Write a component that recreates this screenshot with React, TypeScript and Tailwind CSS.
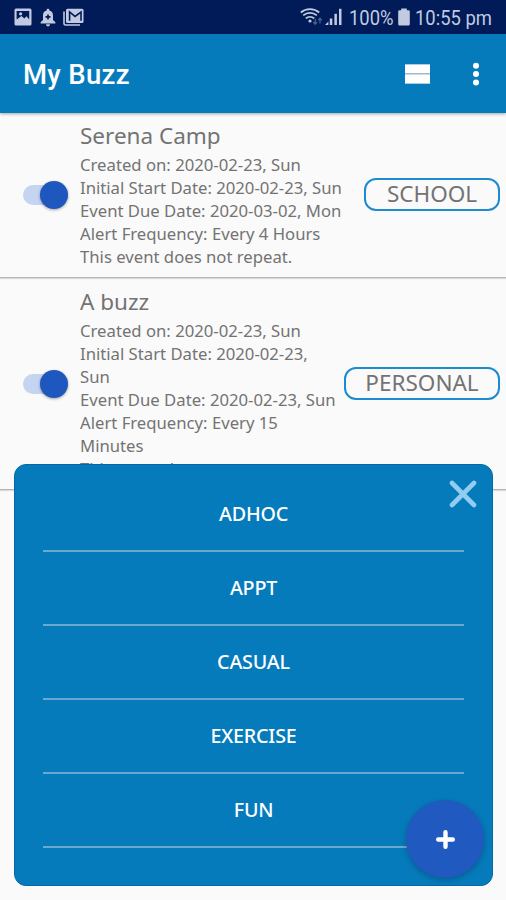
import React, { useState } from 'react';

interface BuzzEvent {
  title: string;
  lines: string[];
  category: string;
  badgeClass: string;
  textClass: string;
}

const EVENTS: BuzzEvent[] = [
  {
    title: 'Serena Camp',
    lines: [
      'Created on: 2020-02-23, Sun',
      'Initial Start Date: 2020-02-23, Sun',
      'Event Due Date: 2020-03-02, Mon',
      'Alert Frequency: Every 4 Hours',
      'This event does not repeat.'
    ],
    category: 'SCHOOL',
    badgeClass: 'w-[136px]',
    textClass: 'w-[270px]'
  },
  {
    title: 'A buzz',
    lines: [
      'Created on: 2020-02-23, Sun',
      'Initial Start Date: 2020-02-23, Sun',
      'Event Due Date: 2020-02-23, Sun',
      'Alert Frequency: Every 15 Minutes',
      'This event does not repeat.'
    ],
    category: 'PERSONAL',
    badgeClass: 'w-[156px]',
    textClass: 'w-[259px]'
  }
];

const CATEGORIES = ['ADHOC', 'APPT', 'CASUAL', 'EXERCISE', 'FUN'];

const StatusBar: React.FC = () => (
  <div className="flex h-[34px] shrink-0 items-center justify-between bg-[#001b58] pl-[14px] pr-[14px] text-[#c3cae0]">
    <div className="flex items-center">
      {/* Screenshot */}
      <svg width="18" height="18" viewBox="0 0 18 18" fill="none">
        <rect x="0.5" y="0.5" width="17" height="17" rx="1.5" fill="currentColor" />
        <path d="M2.6 3H15.2V11.5L12.6 8.3L10.3 10.6L7.5 8L2.6 11.5Z" fill="#001b58" />
        <circle cx="6.6" cy="5.8" r="1.6" fill="currentColor" />
      </svg>
      {/* Alert bell */}
      <svg className="ml-[8px]" width="16" height="19" viewBox="0 0 16 19" fill="none">
        <path
          d="M8 0.8C9 0.8 9.4 1.5 9.4 2.4C12 3 13 5 13 7.5V12L15.4 14.2V15.4H0.6V14.2L3 12V7.5C3 5 4 3 6.6 2.4C6.6 1.5 7 0.8 8 0.8Z"
          fill="currentColor"
        />
        <path d="M6 16.3H10C10 17.6 9.1 18.4 8 18.4S6 17.6 6 16.3Z" fill="currentColor" />
        <path d="M8 6.4V11.4M5.5 8.9H10.5" stroke="#001b58" strokeWidth="1.7" />
      </svg>
      {/* Mail stack */}
      <svg className="ml-[7px]" width="21" height="18" viewBox="0 0 21 18" fill="none">
        <path d="M1 3.5V15.5Q1 17 2.5 17H17" stroke="currentColor" strokeWidth="1.6" />
        <rect x="3" y="0.8" width="17.5" height="14.2" rx="1.5" fill="currentColor" />
        <path d="M6.6 12.8V4L12 8.4L18 4V12.8" stroke="#001b58" strokeWidth="1.6" />
      </svg>
    </div>

    <div className="flex items-center">
      <svg className="mr-[2px]" width="23" height="18" viewBox="0 0 23 18" fill="none" stroke="currentColor" strokeWidth="1.9">
        <path d="M0.8 4.4C6 0 14 0 19.2 4.4" />
        <path d="M3.2 7.4C7.2 4 12.8 4 16.8 7.4" />
        <path d="M5.8 10.4C8.2 8.3 11.8 8.3 14.2 10.4" />
        <circle cx="10" cy="13" r="1.6" fill="currentColor" stroke="none" />
        <path d="M15.2 10.8V16M13.4 14L15.2 16.2L17 14M20 15.5V10.3M18.2 12.4L20 10.2L21.8 12.4" strokeWidth="1.2" opacity="0.4" />
      </svg>
      <svg className="mr-[7px]" width="17" height="18" viewBox="0 0 17 18" fill="currentColor">
        <path d="M0 17L3.4 13.5V17Z" />
        <rect x="4.8" y="10.5" width="2.5" height="6.5" />
        <rect x="9.4" y="5.8" width="2.5" height="11.2" />
        <rect x="14" y="0.8" width="2.5" height="16.2" />
      </svg>
      <span className="w-[44px] whitespace-nowrap pt-px font-['Roboto',sans-serif] text-[20px] leading-[34px]">
        <span className="inline-block origin-left scale-x-[0.92]">100%</span>
      </span>
      <svg className="ml-[5px] mr-[5px]" width="12" height="18" viewBox="0 0 12 18" fill="currentColor">
        <path d="M3.2 0.5H8.8V2.2H10.5Q11.8 2.2 11.8 3.5V16Q11.8 17.5 10.5 17.5H1.5Q0.2 17.5 0.2 16V3.5Q0.2 2.2 1.5 2.2H3.2Z" />
      </svg>
      <span className="w-[77px] whitespace-nowrap pt-px font-['Roboto',sans-serif] text-[20px] leading-[34px]">
        <span className="inline-block origin-left scale-x-[0.92]">10:55 pm</span>
      </span>
    </div>
  </div>
);

const AppBar: React.FC = () => (
  <header className="z-10 flex h-[79px] shrink-0 items-center bg-[#067bbc] pl-[23px] pr-[26px] shadow-[0_1px_3px_rgba(0,0,0,0.35)]">
    <h1 className="flex-1 pt-[3px] font-['Roboto',sans-serif] text-[27.5px] font-medium tracking-[0.3px] text-white">My Buzz</h1>
    <button className="mr-[42px]" aria-label="Toggle view">
      <svg width="25" height="20" viewBox="0 0 25 20">
        <rect y="0.5" width="25" height="19" fill="#a3b9c6" />
        <rect y="0.5" width="25" height="8.5" fill="#fff" />
        <rect y="10.5" width="25" height="9" fill="#fff" />
      </svg>
    </button>
    <button aria-label="More options">
      <svg width="8" height="24" viewBox="0 0 8 24" fill="#fff">
        <circle cx="4" cy="3.8" r="3" />
        <circle cx="4" cy="12" r="3" />
        <circle cx="4" cy="20.4" r="3" />
      </svg>
    </button>
  </header>
);

const Toggle: React.FC = () => {
  const [on, setOn] = useState(true);

  return (
    <button
      role="switch"
      aria-checked={on}
      onClick={() => setOn(!on)}
      className={`mt-[2px] flex h-[20px] w-[45px] shrink-0 items-center rounded-full bg-[#c5d4f0] ${on ? 'justify-end' : 'justify-start'}`}
    >
      <span className="size-[28px] rounded-full bg-[#1e57bd] shadow-[0_1px_3px_rgba(0,0,0,0.35)]" />
    </button>
  );
};

const EventRow: React.FC<{ event: BuzzEvent }> = ({ event }) => (
  <li className="flex items-center border-b border-[#b5b5b5] pb-[9px] pl-[23px] pr-[6px] pt-[7px] shadow-[0_1px_1px_rgba(0,0,0,0.12)]">
    <Toggle />
    <div className={`ml-[12px] shrink-0 text-[#737373] ${event.textClass}`}>
      <h2 className="pb-px text-[22.5px] leading-[33px]">{event.title}</h2>
      {event.lines.map((line) => (
        <p key={line} className="text-[16.7px] leading-[23px]">{line}</p>
      ))}
    </div>
    <span
      className={`ml-auto mt-px flex h-[33px] shrink-0 items-center justify-center rounded-[12px] border-2 border-[#1c8bd0] text-[22.5px] leading-none text-[#737373] ${event.badgeClass}`}
    >
      {event.category}
    </span>
  </li>
);

export default function App() {
  return (
    <div className="relative flex h-[900px] w-[506px] flex-col overflow-hidden bg-[#fafafa] font-['Noto_Sans',sans-serif]">
      <StatusBar />
      <AppBar />
      <ul className="-mt-px">
        {EVENTS.map((event) => (
          <EventRow key={event.title} event={event} />
        ))}
      </ul>

      {/* Category picker */}
      <div className="absolute left-[14px] top-[464px] z-20 h-[422px] w-[479px] rounded-[12px] border border-[#0569a6] bg-[#067bbc] px-[28px] pt-[13px]">
        {CATEGORIES.map((name) => (
          <div
            key={name}
            className="flex h-[74px] items-center justify-center border-b-2 border-[#6aa9cf] text-[19.7px] font-medium tracking-[-0.2px] text-white"
          >
            {name}
          </div>
        ))}
        <button className="absolute right-[15px] top-[15px]" aria-label="Close">
          <svg width="28" height="28" viewBox="0 0 28 28" fill="none" stroke="#92cdf0" strokeWidth="4.6" strokeLinecap="round">
            <path d="M3 3L25 25M25 3L3 25" />
          </svg>
        </button>
      </div>

      <button
        className="absolute left-[406px] top-[800px] z-30 flex size-[78px] items-center justify-center rounded-full bg-[#2059bf] shadow-[0_2px_6px_rgba(0,0,0,0.25)]"
        aria-label="Add buzz"
      >
        <svg width="19" height="19" viewBox="0 0 19 19" fill="none" stroke="#fff" strokeWidth="4.4" strokeLinecap="round">
          <path d="M9.5 2.2V16.8M2.2 9.5H16.8" />
        </svg>
      </button>
    </div>
  );
}
